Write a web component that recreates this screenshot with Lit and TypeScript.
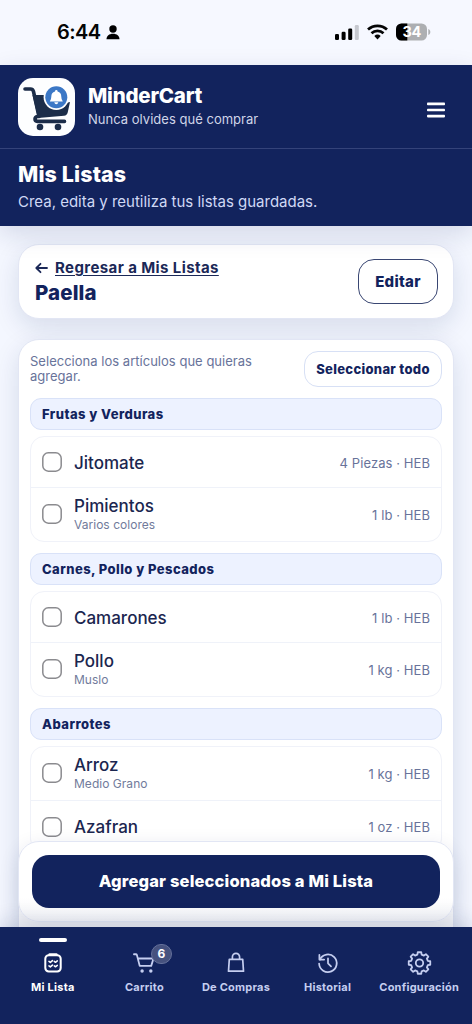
import { LitElement, html, css, svg } from "lit";
import { customElement, property } from "lit/decorators.js";

type Item = { name: string; note?: string; qty: string };
type Group = { title: string; items: Item[] };

const groups: Group[] = [
  {
    title: "Frutas y Verduras",
    items: [
      { name: "Jitomate", qty: "4 Piezas · HEB" },
      { name: "Pimientos", note: "Varios colores", qty: "1 lb · HEB" },
    ],
  },
  {
    title: "Carnes, Pollo y Pescados",
    items: [
      { name: "Camarones", qty: "1 lb · HEB" },
      { name: "Pollo", note: "Muslo", qty: "1 kg · HEB" },
    ],
  },
  {
    title: "Abarrotes",
    items: [
      { name: "Arroz", note: "Medio Grano", qty: "1 kg · HEB" },
      { name: "Azafran", qty: "1 oz · HEB" },
    ],
  },
];

const gearPath = (() => {
  const pts: string[] = [];
  const teeth = 8;
  for (let i = 0; i < teeth; i++) {
    const base = (i / teeth) * Math.PI * 2 - Math.PI / 2;
    const steps: [number, number][] = [
      [-0.25, 8.6],
      [-0.16, 10.900],
      [0.16, 10.900],
      [0.25, 8.6],
    ];
    for (const [a, r] of steps) {
      pts.push(`${(12 + r * Math.cos(base + a)).toFixed(2)} ${(12 + r * Math.sin(base + a)).toFixed(2)}`);
    }
  }
  return `M${pts.join("L")}Z`;
})();

const icons: Record<string, unknown> = {
  list: svg`<g stroke-width="2.200"><rect x="3.600" y="3.500" width="16.800" height="17.700" rx="3.800"/><path d="M8.400 2.800h7.200" stroke-width="3"/><path d="M7.600 10.300l1.500 1.100 2.300-2M13.400 10.300l1.300.9 2-1.500M7.600 15.200l1.500 1.100 2.300-2M13.400 15.200l1.300.9 2-1.500" stroke-width="1.700"/></g>`,
  cart: svg`<g stroke-width="1.900"><path d="M1 2.900h1.900q.9 0 1.200.9L7 15H19L21.400 7.300H5.200"/></g><g fill="currentColor" stroke="none"><circle cx="9.500" cy="20.300" r="1.800"/><circle cx="18.600" cy="20.300" r="1.800"/></g>`,
  bag: svg`<g stroke-width="1.700"><path d="M5.300 8.300h13.400l.8 11.900H4.500z"/><path d="M8.400 8.200V6a3.600 3.600 0 0 1 7.200 0v2.200"/></g>`,
  history: svg`<path d="M2.600 3v5.200h5.200"/><path d="M3.200 8.200A9.600 9.600 0 1 1 2.300 12.600"/><path d="M12 7v5.400l3.300 3.300"/>`,
  gear: svg`<path d=${gearPath} stroke-width="1.800"/><circle cx="12" cy="12" r="3.700" stroke-width="1.800"/>`,
};

@customElement("status-bar")
class StatusBar extends LitElement {
  static styles = css`
    :host { display: flex; justify-content: space-between; height: 65px; box-sizing: border-box; padding: 21px 41px 0 57px; background: #f6f8ff; color: #050505; }
    .left, .right { display: flex; align-items: center; height: 22px; }
    .left { gap: 5px; }
    .time { font-size: 20px; font-weight: 600; letter-spacing: -0.55px; }
    .right { gap: 8px; }
    .pct { font: 700 14.500px Inter, sans-serif; letter-spacing: -0.2px; }
  `;
  render() {
    return html`
      <div class="left">
        <span class="time">6:44</span>
        <svg width="14" height="15" viewBox="0 0 14 15"><circle cx="7" cy="4" r="3.700"/><path d="M.5 14.300C.5 11 3.200 8.800 7 8.800s6.500 2.200 6.500 5.500z"/></svg>
      </div>
      <div class="right">
        <svg width="24" height="18" viewBox="0 0 24 18"><rect x="0" y="11" width="4" height="6" rx="1.300"/><rect x="6.600" y="8.800" width="4" height="8.200" rx="1.300"/><rect x="13.200" y="5.500" width="4" height="11.500" rx="1.300"/><rect x="19.800" y="2" width="4" height="15" rx="1.300" fill="#c6c8cf"/></svg>
        <svg width="21" height="18" viewBox="0 0 21 18" fill="none" stroke="#050505" stroke-width="2.700"><path d="M1 6.600a13.800 13.800 0 0 1 19 0"/><path d="M4.500 10.300a8.700 8.700 0 0 1 12 0"/><path d="M7.300 13a4.700 4.700 0 0 1 6.400 0l-3.200 3.400z" fill="#050505" stroke="none"/></svg>
        <svg width="35" height="18" viewBox="0 0 35 18">
          <defs><clipPath id="cell"><rect y=".5" width="31" height="17" rx="5.500"/></clipPath></defs>
          <g clip-path="url(#cell)"><rect width="31" height="18" fill="#adafb2"/><rect width="11.300" height="18"/></g>
          <path d="M32.300 6v6c1.300-.5 2-1.500 2-3s-.7-2.500-2-3z" fill="#adafb2"/>
          <text class="pct" x="15.800" y="14.200" text-anchor="middle" fill="#fff">34</text>
        </svg>
      </div>`;
  }
}

@customElement("brand-header")
class BrandHeader extends LitElement {
  static styles = css`
    :host { display: block; background: #12235d; color: #fff; height: 161px; position: relative; z-index: 2; box-shadow: 0 8px 24px rgba(18, 35, 93, 0.14); }
    .brand { display: flex; align-items: center; height: 83px; border-bottom: 1px solid #34437a; padding: 0 27px 0 18px; }
    .logo { display: block; flex: none; margin-right: 13px; }
    .names { flex: 1; padding-bottom: 1px; }
    .name { font-size: 20.500px; line-height: 24px; font-weight: 800; letter-spacing: -0.22px; }
    .tag { font-size: 13px; line-height: 17px; margin-top: 3px; color: #d0d5e8; letter-spacing: 0.02px; }
    .menu { display: block; margin-top: 7px; }
    .page { padding: 12px 18px 0; }
    .title { font-size: 21.500px; line-height: 26px; font-weight: 800; letter-spacing: 0.1px; }
    .sub { font-size: 15px; line-height: 19px; margin-top: 5px; color: #d0d9f5; letter-spacing: -0.01px; }
  `;
  render() {
    return html`
      <div class="brand">
        <svg class="logo" width="57" height="58" viewBox="0 0 57 58">
          <rect width="57" height="58" rx="15" fill="#fdfeff"/>
          <path d="M7 11h5.500q2.200 0 2.900 2.200L21 38.500M19.500 38.500q-2.500.5-2.500 2.600t2.500 2.300H46.500" fill="none" stroke="#1c2d49" stroke-width="3.600" stroke-linecap="round" stroke-linejoin="round"/>
          <path d="M14.500 17H32l8 10 12-3-2.300 10.500q-.7 3-3.700 3.300L20 40z" fill="#1c2d49"/>
          <circle cx="22" cy="49" r="3.300" fill="#1c2d49"/><circle cx="40" cy="49" r="3.300" fill="#1c2d49"/>
          <circle cx="38.300" cy="19.300" r="12.700" fill="#fff"/><circle cx="38.300" cy="19.300" r="11" fill="#3c78c6"/>
          <path d="M38.300 12q1.300 0 1.300 1.400 3.700 1 3.700 5.300 0 3 1.500 4.700H31.800q1.500-1.700 1.500-4.700 0-4.300 3.700-5.300 0-1.400 1.300-1.400zM36.200 24.200h4.200q-.6 2-2.100 2t-2.100-2z" fill="#fff"/>
        </svg>
        <div class="names"><div class="name">MinderCart</div><div class="tag">Nunca olvides qué comprar</div></div>
        <svg class="menu" width="18" height="16" viewBox="0 0 18 16" fill="#fff"><rect y=".6" width="18" height="2.600" rx=".8"/><rect y="6.700" width="18" height="2.600" rx=".8"/><rect y="12.800" width="18" height="2.600" rx=".8"/></svg>
      </div>
      <div class="page"><div class="title">Mis Listas</div><div class="sub">Crea, edita y reutiliza tus listas guardadas.</div></div>`;
  }
}

@customElement("item-group")
class ItemGroup extends LitElement {
  @property({ attribute: false }) group!: Group;
  static styles = css`
    :host { display: block; }
    .head { box-sizing: border-box; height: 32px; border: 1px solid #d9e2f8; border-radius: 11px; background: #edf2ff; padding: 0 11px; font-size: 13px; line-height: 31px; font-weight: 800; letter-spacing: 0.45px; color: #12235d; }
    .items { margin-top: 6px; border: 1px solid #f0f2f9; border-radius: 14px; box-sizing: border-box; }
    .row { display: flex; align-items: center; height: 50px; padding: 0 11px; }
    .row + .row { border-top: 1px solid #eff2f9; height: 51px; }
    .row.noted, .row + .row.noted { height: 52px; padding-bottom: 1px; }
    .box { display: block; flex: none; margin-right: 12px; }
    .text { flex: 1; padding-top: 1px; }
    .noted .text { padding-top: 0; }
    .name { font-size: 17px; line-height: 20px; font-weight: 500; color: #1b264f; letter-spacing: 0; }
    .note { font-size: 12px; line-height: 15px; margin-top: 1px; color: #717b9b; letter-spacing: 0.03px; }
    .qty { font-size: 13px; line-height: 16px; padding-top: 1px; color: #68739a; letter-spacing: 0.08px; }
  `;
  render() {
    return html`
      <div class="head">${this.group.title}</div>
      <div class="items">
        ${this.group.items.map(
          (i) => html`<div class="row ${i.note ? "noted" : ""}">
            <svg class="box" width="20" height="20" viewBox="0 0 20 20"><rect x=".8" y=".8" width="18.400" height="18.400" rx="5.500" fill="#fff" stroke="#8b8b8f" stroke-width="1.500"/></svg>
            <div class="text"><div class="name">${i.name}</div>${i.note ? html`<div class="note">${i.note}</div>` : ""}</div>
            <span class="qty">${i.qty}</span>
          </div>`
        )}
      </div>`;
  }
}

@customElement("tab-bar")
class TabBar extends LitElement {
  static styles = css`
    :host { display: grid; grid-template-columns: repeat(5, 1fr); height: 97px; box-sizing: border-box; padding: 0 7px; background: #12235d; position: relative; z-index: 3; box-shadow: 0 -6px 18px rgba(18, 35, 93, 0.16); }
    .tab { display: flex; flex-direction: column; align-items: center; color: #c5cef0; padding-top: 11px; }
    .mark { width: 28px; height: 3.500px; border-radius: 2px; }
    .active { color: #fff; }
    .active .mark { background: #fff; }
    .icon { position: relative; margin-top: 9px; height: 24px; }
    .icon svg { display: block; fill: none; stroke: currentColor; stroke-width: 1.900; stroke-linecap: round; stroke-linejoin: round; }
    .label { font-size: 11px; line-height: 14px; font-weight: 700; letter-spacing: 0.24px; margin-top: 5px; white-space: nowrap; }
    .badge { position: absolute; left: 18px; top: -7px; width: 21px; height: 20px; box-sizing: border-box; border: 1px solid #65719b; border-radius: 10px; background: #46527f; color: #fff; font-size: 12px; line-height: 18px; font-weight: 700; text-align: center; }
  `;
  render() {
    const tabs = [
      { icon: "list", label: "Mi Lista", size: 22, active: true },
      { icon: "cart", label: "Carrito", size: 23, badge: "6" },
      { icon: "bag", label: "De Compras", size: 24 },
      { icon: "history", label: "Historial", size: 22 },
      { icon: "gear", label: "Configuración", size: 25 },
    ];
    return tabs.map(
      (t) => html`<div class="tab ${t.active ? "active" : ""}">
        <div class="mark"></div>
        <div class="icon">
          <svg width=${t.size} height="24" viewBox="0 0 24 24">${icons[t.icon]}</svg>
          ${t.badge ? html`<span class="badge">${t.badge}</span>` : ""}
        </div>
        <div class="label">${t.label}</div>
      </div>`
    );
  }
}

@customElement("app-root")
class AppRoot extends LitElement {
  static styles = css`
    :host { display: flex; flex-direction: column; height: 1024px; overflow: hidden; font-family: Inter, sans-serif; background: #f4f7ff; -webkit-font-smoothing: antialiased; }
    .main { flex: 1; min-height: 0; overflow: hidden; position: relative; padding: 18px 18px 0; }
    .card { box-sizing: border-box; border: 1px solid #e2e6f4; border-radius: 21px; background: #fff; box-shadow: 0 8px 26px rgba(18, 35, 93, 0.13); }
    .top { display: flex; align-items: center; justify-content: space-between; height: 75px; padding: 0 15px 0 16px; }
    .back { display: flex; align-items: center; gap: 7px; font-size: 15px; line-height: 20px; font-weight: 700; color: #1b2857; }
    .link { text-decoration: underline; text-underline-offset: 2px; text-decoration-thickness: 1px; letter-spacing: 0.4px; }
    .list-name { font-size: 20.500px; line-height: 25px; font-weight: 800; color: #12235d; margin-top: 2px; letter-spacing: 0.1px; }
    .edit { box-sizing: border-box; width: 80px; height: 45px; border: 1px solid #394672; border-radius: 16px; text-align: center; font-size: 15px; line-height: 43px; font-weight: 800; color: #12235d; letter-spacing: 0.3px; }
    .body { margin-top: 20px; padding: 11px; height: 700px; }
    .pick { display: flex; justify-content: space-between; align-items: flex-start; height: 37px; }
    .hint { width: 240px; font-size: 13px; line-height: 15.500px; color: #68739a; margin-top: 2.500px; letter-spacing: 0.02px; }
    .all { box-sizing: border-box; width: 138px; height: 36px; border: 1px solid #d7e0f5; border-radius: 14px; text-align: center; font-size: 13px; line-height: 35px; font-weight: 800; color: #12235d; white-space: nowrap; letter-spacing: 0.32px; }
    .groups { display: grid; gap: 11px; margin-top: 10px; }
    .cta { position: absolute; left: 18px; right: 18px; bottom: 5px; height: 81px; padding: 13px; background: linear-gradient(#fff 70%, #f4f5f8); box-shadow: 0 6px 20px rgba(18, 35, 93, 0.12); }
    .add { height: 53px; border-radius: 17px; background: #12235d; color: #fff; text-align: center; font-size: 16.500px; line-height: 53px; font-weight: 800; letter-spacing: 0.17px; }
  `;
  render() {
    return html`
      <status-bar></status-bar>
      <brand-header></brand-header>
      <div class="main">
        <div class="card top">
          <div class="names">
            <div class="back">
              <svg width="13" height="12" viewBox="0 0 13 12" fill="none" stroke="#1b2857" stroke-width="1.800" stroke-linecap="round" stroke-linejoin="round"><path d="M12 6H1.500M5.500 1.800 1.300 6l4.200 4.200"/></svg>
              <span class="link">Regresar a Mis Listas</span>
            </div>
            <div class="list-name">Paella</div>
          </div>
          <div class="edit">Editar</div>
        </div>
        <div class="card body">
          <div class="pick"><div class="hint">Selecciona los artículos que quieras agregar.</div><div class="all">Seleccionar todo</div></div>
          <div class="groups">${groups.map((g) => html`<item-group .group=${g}></item-group>`)}</div>
        </div>
        <div class="card cta"><div class="add">Agregar seleccionados a Mi Lista</div></div>
      </div>
      <tab-bar></tab-bar>`;
  }
}
